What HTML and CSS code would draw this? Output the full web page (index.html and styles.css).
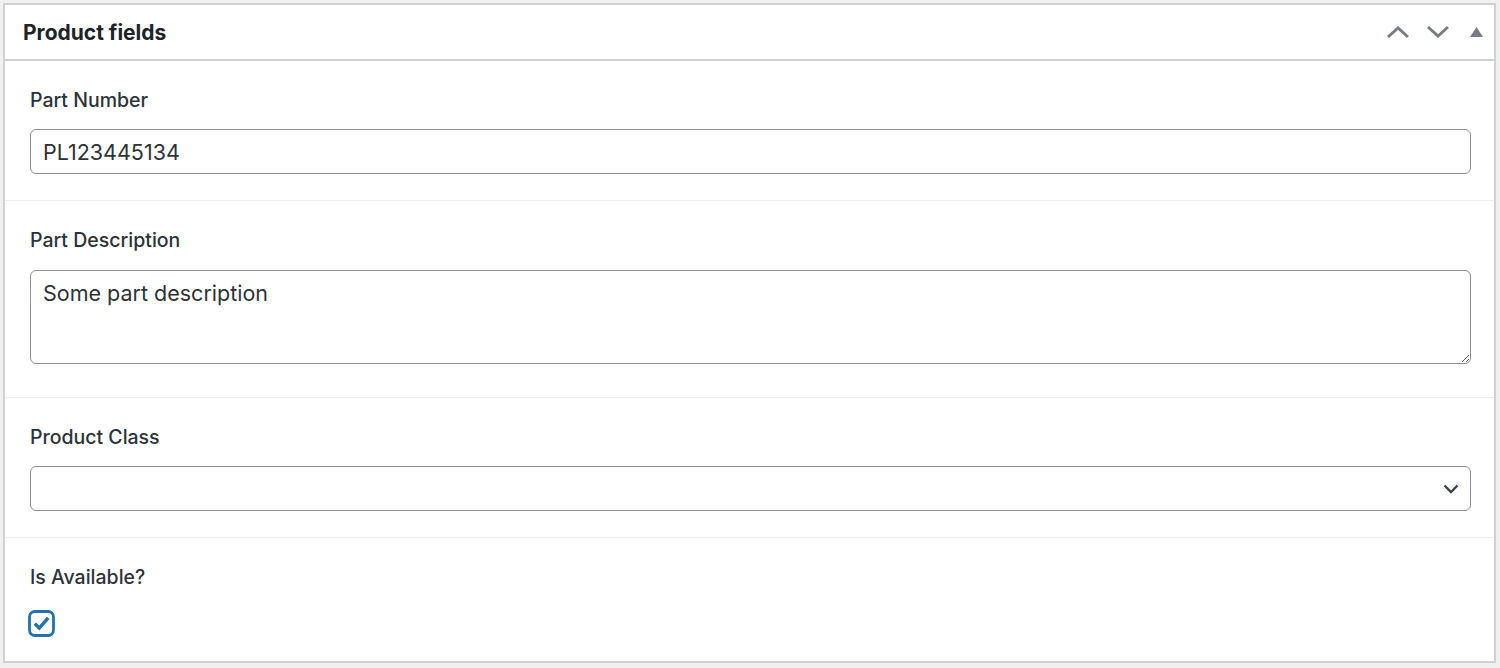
FILE: index.html
```html
<!DOCTYPE html>
<html lang="en">
<head>
<meta charset="utf-8">
<title>Product fields</title>
<link rel="stylesheet" href="styles.css">
</head>
<body>
<div class="postbox">
  <div class="postbox-header">
    <h2 class="postbox-title">Product fields</h2>
    <div class="handle-actions">
      <button class="handle-btn" aria-label="Move up">
        <svg width="24" height="14" viewBox="0 0 24 14"><path d="M2 12 L12 3 L22 12" fill="none" stroke="#787c82" stroke-width="3" stroke-linejoin="miter"/></svg>
      </button>
      <button class="handle-btn" aria-label="Move down">
        <svg width="24" height="14" viewBox="0 0 24 14"><path d="M2 2 L12 11 L22 2" fill="none" stroke="#787c82" stroke-width="3" stroke-linejoin="miter"/></svg>
      </button>
      <button class="handle-btn toggle" aria-label="Toggle panel">
        <svg width="13" height="10" viewBox="0 0 13 10"><path d="M6.5 0 L13 10 L0 10 Z" fill="#787c82"/></svg>
      </button>
    </div>
  </div>
  <div class="fields">
    <div class="field">
      <label class="field-label" for="part-number">Part Number</label>
      <input class="text-input" id="part-number" type="text" value="PL123445134">
    </div>
    <div class="field field-textarea">
      <label class="field-label" for="part-desc">Part Description</label>
      <textarea class="text-area" id="part-desc">Some part description</textarea>
    </div>
    <div class="field">
      <label class="field-label" for="product-class">Product Class</label>
      <div class="select-wrap">
        <select class="select" id="product-class"><option value=""></option></select>
        <svg class="select-arrow" width="16" height="10" viewBox="0 0 16 10"><path d="M1.5 1.5 L8 8 L14.5 1.5" fill="none" stroke="#3c434a" stroke-width="2.4"/></svg>
      </div>
    </div>
    <div class="field field-last">
      <div class="field-label">Is Available?</div>
      <label class="checkbox" aria-label="Is Available?">
        <svg width="27" height="27" viewBox="0 0 27 27"><rect x="1.5" y="1.5" width="24" height="24" rx="5.5" fill="#fff" stroke="#2271b1" stroke-width="2.8"/><path d="M6.8 13.6 L11.3 18 L20.2 7.8" fill="none" stroke="#2271b1" stroke-width="3.4"/></svg>
      </label>
    </div>
  </div>
</div>
</body>
</html>
```

FILE: styles.css
```css
html, body {
  margin: 0;
  padding: 0;
}
body {
  background: #f0f0f1;
  padding: 3px 4px 5px 3px;
  font-family: Inter, "Noto Sans", "Liberation Sans", sans-serif;
  color: #1d2327;
}
.postbox {
  background: #fff;
  border: 2px solid #d0d1d3;
  height: 660px;
  box-sizing: border-box;
}
.postbox-header {
  height: 54px;
  display: flex;
  align-items: center;
  justify-content: space-between;
  border-bottom: 2px solid #d0d1d3;
  padding: 0 0 0 18px;
}
.postbox-title {
  margin: 0;
  font-size: 21px;
  font-weight: 700;
  color: #1d2327;
}
.handle-actions {
  display: flex;
  align-items: center;
}
.handle-btn {
  border: 0;
  background: none;
  padding: 0;
  width: 40px;
  height: 40px;
  display: flex;
  align-items: center;
  justify-content: center;
  cursor: pointer;
}
.handle-btn.toggle {
  width: 36px;
}
.field {
  padding: 26px 23px 26px 25px;
  border-bottom: 1px solid #eeeeee;
}
.field-textarea {
  padding-bottom: 33px;
}
.field-last {
  border-bottom: 0;
  padding-bottom: 20px;
}
.field-label {
  display: block;
  font-size: 19.5px;
  line-height: 27px;
  font-weight: 500;
  color: #2c3338;
  margin-bottom: 15px;
}
.text-input,
.text-area,
.select {
  display: block;
  box-sizing: border-box;
  width: 100%;
  border: 1.5px solid #8c8f94;
  border-radius: 6px;
  background: #fff;
  font-family: Inter, "Noto Sans", "Liberation Sans", sans-serif;
  font-size: 21.5px;
  color: #2c3338;
  margin: 0;
}
.text-input {
  height: 45px;
  padding: 0 12px;
}
.text-area {
  height: 94px;
  padding: 8px 12px;
  line-height: 28px;
  resize: vertical;
  margin-top: 16px;
}
.field-textarea .field-label {
  margin-bottom: 0;
}
.select-wrap {
  position: relative;
}
.select {
  height: 45px;
  padding: 0 40px 0 12px;
  appearance: none;
  -webkit-appearance: none;
}
.select-arrow {
  position: absolute;
  right: 12px;
  top: 18px;
  pointer-events: none;
}
.checkbox {
  display: block;
  width: 27px;
  height: 27px;
  margin-top: 19px;
  margin-left: -2px;
}
.field-last .field-label {
  margin-bottom: 0;
}
```
